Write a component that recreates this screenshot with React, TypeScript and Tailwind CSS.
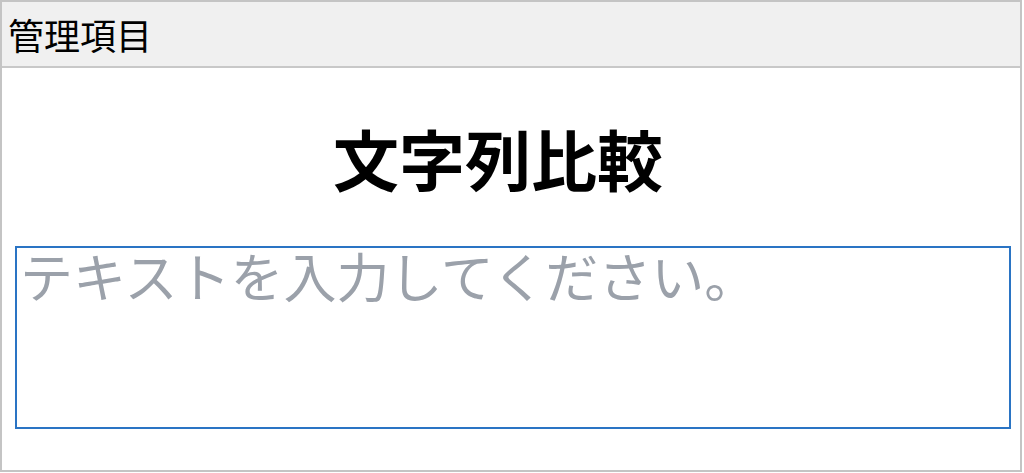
import React from "react";

const App = () => {
  return (
    <div
      className="w-[1024px] h-[473px] bg-white"
      style={{ fontFamily: '"Noto Sans CJK JP", "Noto Sans", sans-serif' }}
    >
      <div className="w-[1022px] h-[472px] border-2 border-[#c4c4c4] flex flex-col">
        {/* Header */}
        <div className="h-[66px] bg-[#f0f0f0] border-b-2 border-[#c8c8c8] flex items-center px-[6px]">
          <span className="text-[36px] leading-none text-black">管理項目</span>
        </div>

        {/* Body */}
        <div className="flex-1 flex flex-col px-[13px]">
          <h1 className="mt-[56px] text-center text-[66px] leading-none font-bold text-black pr-[26px]">
            文字列比較
          </h1>
          <textarea
            className="mt-[56px] w-[996px] h-[183px] border-2 border-[#2a74c4] resize-none outline-none px-[3px] py-0 text-[53px] leading-[54px] placeholder:text-[#9ba1aa]"
            placeholder="テキストを入力してください。"
          />
        </div>
      </div>
    </div>
  );
};

export default App;
